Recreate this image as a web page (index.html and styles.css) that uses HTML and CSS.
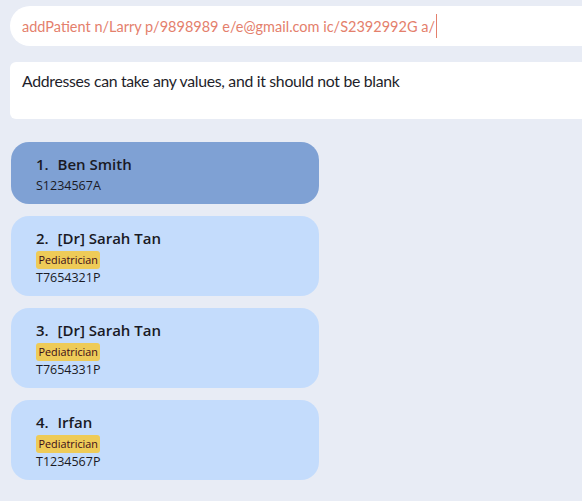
FILE: index.html
```html
<!DOCTYPE html>
<html>
<head>
<meta charset="utf-8">
<link rel="stylesheet" href="styles.css">
</head>
<body>
<div class="app">
  <div class="command">
    <span class="cmd-text">addPatient n/Larry p/9898989 e/e@gmail.com ic/S2392992G a/</span><span class="caret"></span>
  </div>
  <div class="result">Addresses can take any values, and it should not be blank</div>
  <div class="list">
    <div class="card selected">
      <div class="name"><span class="idx">1.</span>Ben Smith</div>
      <div class="ic">S1234567A</div>
    </div>
    <div class="card">
      <div class="name"><span class="idx">2.</span>[Dr] Sarah Tan</div>
      <div class="tags"><span class="tag">Pediatrician</span></div>
      <div class="ic">T7654321P</div>
    </div>
    <div class="card">
      <div class="name"><span class="idx">3.</span>[Dr] Sarah Tan</div>
      <div class="tags"><span class="tag">Pediatrician</span></div>
      <div class="ic">T7654331P</div>
    </div>
    <div class="card">
      <div class="name"><span class="idx">4.</span>Irfan</div>
      <div class="tags"><span class="tag">Pediatrician</span></div>
      <div class="ic">T1234567P</div>
    </div>
  </div>
</div>
</body>
</html>
```
FILE: styles.css
```css
html, body {
  margin: 0;
  padding: 0;
  background: #e8ecf5;
  font-family: "Open Sans", "Noto Sans", sans-serif;
  color: #1c1c24;
}
.app {
  padding: 6px 0 0 10px;
  width: 572px;
  overflow: hidden;
}
.command {
  height: 40px;
  background: #ffffff;
  border-radius: 20px 0 0 20px;
  margin-right: -20px;
  display: flex;
  align-items: center;
  padding-left: 12px;
  font-family: Lato, "Open Sans", sans-serif;
  font-size: 14.5px;
  color: #e4806c;
}
.caret {
  display: inline-block;
  width: 1px;
  height: 24px;
  background: #e4806c;
  margin-left: 1px;
}
.result {
  margin-top: 16px;
  height: 57px;
  background: #ffffff;
  border-radius: 6px 0 0 6px;
  margin-right: -20px;
  padding: 9px 0 0 12px;
  box-sizing: border-box;
  font-family: Lato, "Open Sans", sans-serif;
  font-size: 15.8px;
  line-height: 20px;
  letter-spacing: -0.3px;
  color: #1e1e2a;
}
.list {
  margin-top: 23px;
  display: flex;
  flex-direction: column;
  gap: 12px;
  width: 308px;
  padding-left: 1px;
}
.card {
  background: #c4dcfc;
  border-radius: 18px;
  padding: 11px 0 10px 25px;
  box-sizing: border-box;
}
.card.selected {
  background: #7fa1d4;
}
.name {
  font-size: 15px;
  font-weight: 600;
  line-height: 22px;
  color: #1a1a24;
}
.idx {
  display: inline-block;
  width: 21.5px;
}
.tags {
  display: flex;
  margin-top: 2px;
}
.tag {
  background: #eecb58;
  color: #3a0a18;
  font-size: 10.8px;
  line-height: 18px;
  padding: 0 2.5px;
  border-radius: 3px;
}
.ic {
  font-size: 12.5px;
  line-height: 17px;
  color: #1a1a24;
}
.name + .ic {
  margin-top: 2px;
}
```
